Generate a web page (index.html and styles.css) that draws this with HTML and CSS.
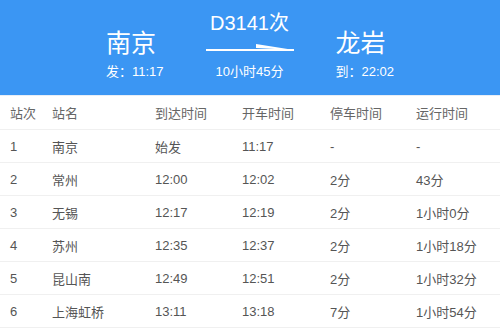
FILE: index.html
```html
<!DOCTYPE html>
<html lang="zh">
<head>
<meta charset="utf-8">
<link rel="stylesheet" href="styles.css">
</head>
<body>
<div class="hero">
  <div class="side">
    <div class="city">南京</div>
    <div class="sub">发：11:17</div>
  </div>
  <div class="mid">
    <div class="train">D3141次</div>
    <svg class="arrow" width="88" height="20" viewBox="0 0 88 20">
      <rect x="0" y="11" width="88" height="2" fill="#fff"/>
      <polygon points="50,6 88,12 50,10" fill="#fff"/>
    </svg>
    <div class="sub">10小时45分</div>
  </div>
  <div class="side">
    <div class="city">龙岩</div>
    <div class="sub">到：22:02</div>
  </div>
</div>
<div class="table">
  <div class="row head"><span>站次</span><span>站名</span><span>到达时间</span><span>开车时间</span><span>停车时间</span><span>运行时间</span></div>
  <div class="row"><span>1</span><span>南京</span><span>始发</span><span>11:17</span><span>-</span><span>-</span></div>
  <div class="row"><span>2</span><span>常州</span><span>12:00</span><span>12:02</span><span>2分</span><span>43分</span></div>
  <div class="row"><span>3</span><span>无锡</span><span>12:17</span><span>12:19</span><span>2分</span><span>1小时0分</span></div>
  <div class="row"><span>4</span><span>苏州</span><span>12:35</span><span>12:37</span><span>2分</span><span>1小时18分</span></div>
  <div class="row"><span>5</span><span>昆山南</span><span>12:49</span><span>12:51</span><span>2分</span><span>1小时32分</span></div>
  <div class="row"><span>6</span><span>上海虹桥</span><span>13:11</span><span>13:18</span><span>7分</span><span>1小时54分</span></div>
</div>
</body>
</html>
```
FILE: styles.css
```css
html, body {
  margin: 0;
  padding: 0;
  background: #fff;
}
body {
  font-family: "Liberation Sans", "Noto Sans CJK SC", sans-serif;
  width: 500px;
  height: 330px;
  overflow: hidden;
}
.hero {
  height: 95px;
  background: #3b96f3;
  color: #fff;
  display: flex;
  justify-content: center;
  align-items: flex-start;
  gap: 42px;
}
.side {
  display: flex;
  flex-direction: column;
  padding-top: 29px;
}
.city {
  font-size: 25px;
  line-height: 28px;
}
.sub {
  font-size: 13px;
  line-height: 16px;
  margin-top: 7px;
}
.mid {
  display: flex;
  flex-direction: column;
  align-items: center;
  width: 88px;
  padding-top: 11px;
}
.train {
  font-size: 20px;
  line-height: 24px;
}
.arrow {
  display: block;
  margin-top: 3px;
}
.mid .sub {
  margin-top: 6px;
}
.table {
  border-top: 1px solid #e8eef6;
}
.row {
  display: grid;
  grid-template-columns: 42px 103px 87px 88px 86px 1fr;
  padding-left: 10px;
  height: 32px;
  align-items: center;
  border-bottom: 1px solid #f0f0f0;
  font-size: 13px;
  color: #555;
}
.row.head {
  height: 33px;
  color: #666;
}
```
